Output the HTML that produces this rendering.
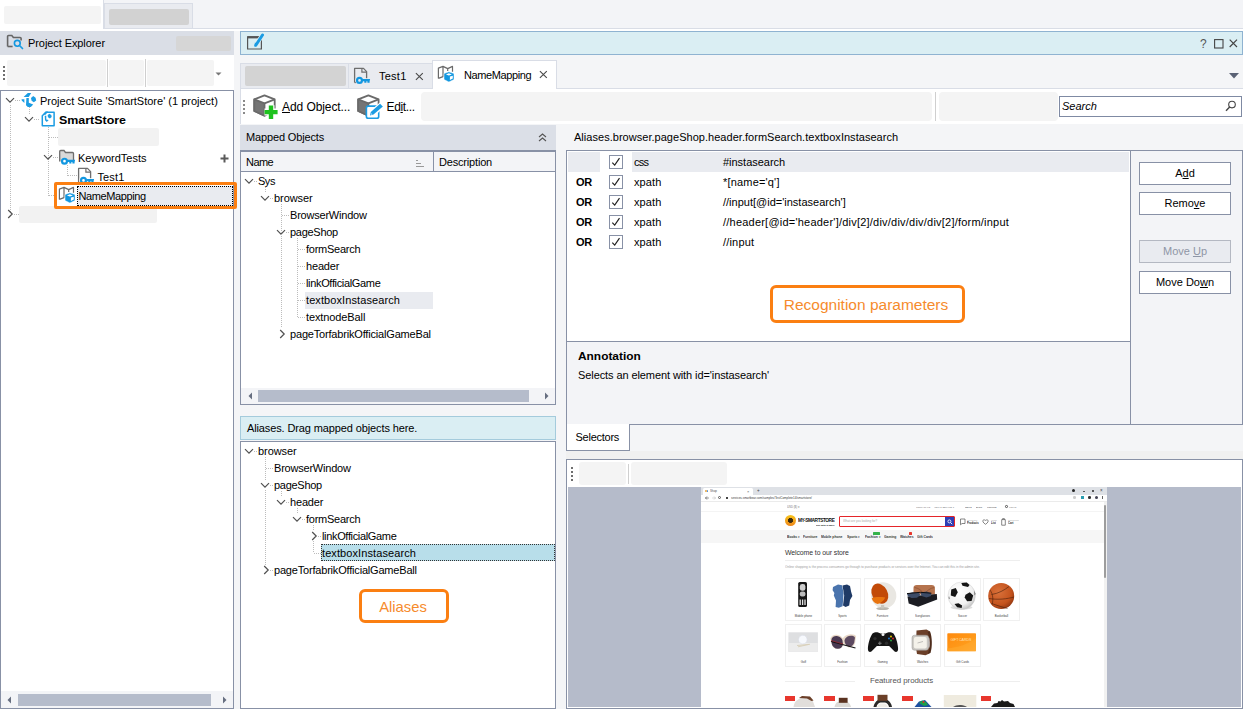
<!DOCTYPE html>
<html><head><meta charset="utf-8">
<style>
*{box-sizing:border-box;margin:0;padding:0}
html,body{width:1243px;height:709px;overflow:hidden;background:#f4f5f7;font-family:"Liberation Sans",sans-serif;font-size:11px;color:#000}
.a{position:absolute}
.t{position:absolute;white-space:pre;line-height:13px;height:13px}
.ph{position:absolute;background:#f2f2f2;border-radius:2px}
.phd{position:absolute;background:#d2d2d2;border-radius:2px}
.hd{position:absolute;background:#dadee6}
.bd{border:1px solid #8891a6}
.dotv{position:absolute;width:1px;background-image:linear-gradient(#bcbcbc 50%,transparent 50%);background-size:1px 2px}
.doth{position:absolute;height:1px;background-image:linear-gradient(90deg,#bcbcbc 50%,transparent 50%);background-size:2px 1px}
.btn{position:absolute;background:#fff;border:1px solid #8891a6;text-align:center;line-height:21px;height:23px;width:92px;left:1139px}
u{text-decoration:underline;text-underline-offset:1px}
</style></head><body>
<!-- TOP TAB BAR -->
<div class="a" style="left:0;top:0;width:1243px;height:29px;background:#f3f4f7;border-bottom:1px solid #d9dde6"></div><div class="a" style="left:0;top:29px;width:1243px;height:2px;background:#fff"></div>
<div class="a" style="left:0;top:0;width:104px;height:29px;background:#fff;border-right:1px solid #d9dde6"></div>
<div class="ph" style="left:4px;top:6px;width:97px;height:18px;background:#f4f4f4"></div>
<div class="a" style="left:104px;top:3px;width:89px;height:25px;background:#e9ebf0;border:1px solid #d9dde6;border-bottom:none"></div>
<div class="phd" style="left:109px;top:9px;width:80px;height:16px"></div>

<!-- LEFT PANEL -->
<div class="hd" style="left:0;top:31px;width:234px;height:24px"></div>
<div class="t" style="left:28px;top:37px;letter-spacing:-.08px">Project Explorer</div>
<div class="phd" style="left:176px;top:36px;width:55px;height:15px;background:#d6d6d6"></div>

<div class="a" style="left:0;top:55px;width:234px;height:35px;background:#fff"></div>
<div class="a" style="left:3px;top:66px;width:2px;height:14px;background-image:linear-gradient(#6e6e6e 50%,transparent 50%);background-size:2px 4px"></div>
<div class="ph" style="left:7px;top:60px;width:99px;height:26px;background:#f4f4f4"></div>
<div class="a" style="left:107px;top:59px;width:1px;height:28px;background:#cfcfcf"></div>
<div class="ph" style="left:109px;top:60px;width:35px;height:26px;background:#f4f4f4"></div>
<div class="a" style="left:145px;top:59px;width:1px;height:28px;background:#cfcfcf"></div>
<div class="ph" style="left:147px;top:60px;width:67px;height:26px;background:#f4f4f4"></div>
<svg class="a" style="left:215px;top:72px" width="8" height="5"><path d="M0.5 0.5h6L3.5 3.5z" fill="#777"/></svg>
<svg class="a" style="left:6px;top:34px" width="18" height="16" viewBox="0 0 18 16"><path d="M1.600 12.500v-10a1 1 0 0 1 1-1h3.200l1.600 2h6.700a1 1 0 0 1 1 1v2" fill="none" stroke="#666" stroke-width="1.600"/><path d="M1.600 12.500h5" fill="none" stroke="#666" stroke-width="1.600"/><circle cx="11.300" cy="9.300" r="2.900" fill="#dadee6" stroke="#1297e0" stroke-width="1.600"/><path d="M13.5 11.5l3 3" stroke="#1b9ce3" stroke-width="1.7" stroke-linecap="round"/></svg>

<div class="a bd" style="left:0;top:90px;width:234px;height:619px;background:#fff"></div>

<div class="dotv" style="left:10px;top:105px;height:108px"></div>
<div class="doth" style="left:15px;top:100px;width:6px"></div>
<div class="dotv" style="left:29px;top:107px;height:8px"></div>
<div class="doth" style="left:34px;top:119px;width:6px"></div>
<div class="dotv" style="left:48px;top:127px;height:69px"></div>
<div class="doth" style="left:49px;top:137px;width:9px"></div>
<div class="doth" style="left:53px;top:157px;width:6px"></div>
<div class="doth" style="left:49px;top:195px;width:6px"></div>
<div class="dotv" style="left:67px;top:165px;height:11px"></div>
<div class="doth" style="left:68px;top:175px;width:10px"></div>
<div class="doth" style="left:14px;top:214px;width:5px"></div>
<svg class="a" style="left:5px;top:97px" width="10" height="7" viewBox="0 0 10 7"><path d="M1 1.2l4 4 4-4" fill="none" stroke="#505050" stroke-width="1.2"/></svg><svg class="a" style="left:24px;top:116px" width="10" height="7" viewBox="0 0 10 7"><path d="M1 1.2l4 4 4-4" fill="none" stroke="#505050" stroke-width="1.2"/></svg><svg class="a" style="left:43px;top:154px" width="10" height="7" viewBox="0 0 10 7"><path d="M1 1.2l4 4 4-4" fill="none" stroke="#505050" stroke-width="1.2"/></svg><svg class="a" style="left:7px;top:209px" width="7" height="10" viewBox="0 0 7 10"><path d="M1.2 1l4 4-4 4" fill="none" stroke="#505050" stroke-width="1.2"/></svg>
<svg class="a" style="left:16px;top:88px" width="24" height="22" viewBox="16 88 24 22"><g fill="#1b9ce3"><path d="M23.600 97l4.200-4h3.400l-2.500 4z"/><path d="M21.500 99.300h2.900v3.600l-2.500-2.200z"/><path d="M26.400 98.100h2.400v4.600l4.400 1.900-2.400 2.500h-3l-1.800-1.900z"/><path d="M31 98.100l2.200-2.200 2.400 1.900.6 2.600-2.400 1.900-2.200-1.600z"/></g></svg>
<svg class="a" style="left:40px;top:110px" width="16" height="18" viewBox="40 110 16 18"><path d="M46 112.200h8.100v13.600H42.300v-10z" fill="#fff" stroke="#1b9ce3" stroke-width="1.500" stroke-linejoin="round"/><g fill="#1b9ce3"><path d="M42.600 114.700l3-3.200h2.600l-2.600 3.200z"/><path d="M44.700 115.800h1.600v3.600l2.400.6-1.900 1.900-1.800-1.600z"/><path d="M47.600 115.300l1.700-1.500 2 1.300.4 1.900-1.800 1.500-1.900-1.200z"/></g></svg>
<div class="ph" style="left:58px;top:128px;width:101px;height:18px"></div>
<svg class="a" style="left:58px;top:149px" width="19" height="17" viewBox="0 0 19 17"><path d="M1.7 12.5v-10a1 1 0 0 1 1-1h3.3l1.5 2h7a1 1 0 0 1 1 1v8" fill="#d9d9d9" stroke="#6e6e6e" stroke-width="1.3"/><circle cx="6.500" cy="12.200" r="2.450" fill="#fff" stroke="#1297e0" stroke-width="2.200"/><path d="M9.300 10.700h7.800l-.5 2.400v1.500h-2.200v-1.500h-1v1.500h-2.100v-1.500H9.300z" fill="#1297e0"/></svg>
<svg class="a" style="left:77px;top:167px" width="19" height="17" viewBox="0 0 19 17"><path d="M1.600 15.500V1.400h8.900l3.100 3.200v7" fill="#fff" stroke="#6e6e6e" stroke-width="1.300" stroke-linejoin="round"/><path d="M8.900 1.400v3.700h4.700" fill="none" stroke="#6e6e6e" stroke-width="1.200"/><path d="M1.600 15.500h1.600" stroke="#6e6e6e" stroke-width="1.300"/><circle cx="6.500" cy="13.400" r="2.450" fill="#fff" stroke="#fff" stroke-width="3.200"/><path d="M9.500 11.400h8v3.400h-8z" fill="#fff"/><circle cx="6.500" cy="13.400" r="2.450" fill="#fff" stroke="#1297e0" stroke-width="2.200"/><path d="M9.300 11.900h7.800l-.5 2.400v1.500h-2.200v-1.500h-1v1.500h-2.100v-1.500H9.300z" fill="#1297e0"/></svg>
<div class="a" style="left:77px;top:186px;width:156px;height:20px;background:#e9ebf0;border:1px dotted #000"></div>
<svg class="a" style="left:58px;top:186px" width="19" height="19" viewBox="0 0 19 19"><path d="M1.400 13.400v-10.300l4.600-1.700 4.700 2.200 4.800-2.200v5.400M1.400 13.400l4.600-1.800v-10.200M10.700 3.600v2.400" fill="none" stroke="#6a6a6a" stroke-width="1.200" stroke-linejoin="round"/><path d="M11.900 6.800l5.100 1.700v6.100l-5.100 2.400-4.900-2.400v-6.100z" fill="#1297e0" stroke="#fff" stroke-width=".5"/><path d="M8.900 9.500l3-1.200 3 1.200-3 1z" fill="#fff"/><path d="M12.900 11.600l2.900-.9v2.900l-2.900 1.400z" fill="#fff"/></svg>
<div class="ph" style="left:19px;top:206px;width:138px;height:17px"></div>
<div class="a" style="left:54px;top:182px;width:183px;height:27px;border:3px solid #fb7f12;border-radius:2px"></div>
<div class="t" style="left:40px;top:95px">Project Suite 'SmartStore' (1 project)</div>
<div class="t" style="left:59px;top:114px;font-weight:700;transform:scaleX(1.13);transform-origin:0 0">SmartStore</div>
<div class="t" style="left:78px;top:152px">KeywordTests</div>
<div class="t" style="left:97.400px;top:171px;letter-spacing:.18px">Test1</div>
<div class="t" style="left:78.500px;top:190px;letter-spacing:-.4px">NameMapping</div>
<svg class="a" style="left:220px;top:154px" width="9" height="9"><path d="M4.500 0.500v8M0.500 4.500h8" stroke="#5a5a5a" stroke-width="2"/></svg>
<div class="a" style="left:1px;top:691px;width:232px;height:17px;background:#f3f4f7"></div>
<div class="a" style="left:18px;top:694px;width:193px;height:12px;background:#b5bccb"></div>
<svg class="a" style="left:7px;top:696px" width="5" height="8"><path d="M4 0.5v7L0.5 4z" fill="#666e80"/></svg>
<svg class="a" style="left:222px;top:696px" width="5" height="8"><path d="M1 0.5v7L4.5 4z" fill="#666e80"/></svg>


<!-- RIGHT: title -->
<div class="a" style="left:240px;top:31px;width:1003px;height:24px;background:#daeef3;border:1px solid #8fb3d1"></div>

<!-- title bar icons -->
<svg class="a" style="left:244px;top:31px" width="24" height="22" viewBox="244 31 24 22"><path d="M247.600 36.800h13.800v12.200h-13.800z" fill="none" stroke="#555" stroke-width="1.200"/><path d="M247.600 37.300h13.800" stroke="#555" stroke-width="2.200"/><path d="M262.700 34.600l-7.600 11.800" stroke="#daeef3" stroke-width="4.400"/><path d="M262.500 35l-6.700 10.300" stroke="#1b9ce3" stroke-width="3" stroke-linecap="round"/><path d="M256.600 43.600l-2.100 3.600 .4-4.600z" fill="#1b9ce3"/></svg>
<div class="t" style="left:1200px;top:37.500px;color:#555;font-size:12px">?</div>
<svg class="a" style="left:1214px;top:38.500px" width="10" height="10"><rect x=".6" y=".6" width="8.4" height="8.4" fill="none" stroke="#444" stroke-width="1.1"/></svg>
<svg class="a" style="left:1229px;top:39px" width="9" height="9"><path d="M0.7 0.7l7.3 7.3M8 0.7l-7.3 7.3" stroke="#444" stroke-width="1.2"/></svg>
<!-- doc tab strip -->
<div class="a" style="left:240px;top:88px;width:1003px;height:1px;background:#d9dde6"></div>
<div class="a" style="left:240px;top:63px;width:193px;height:26px;background:#e9ebf0;border:1px solid #d9dde6"></div>
<div class="a" style="left:348px;top:64px;width:1px;height:24px;background:#d9dde6"></div>
<div class="phd" style="left:245px;top:66px;width:101px;height:20px;background:#d3d3d3"></div>
<svg class="a" style="left:353px;top:67px" width="19" height="17" viewBox="0 0 19 17"><path d="M1.600 15.500V1.400h8.900l3.100 3.200v7" fill="none" stroke="#6e6e6e" stroke-width="1.300" stroke-linejoin="round"/><path d="M8.900 1.400v3.700h4.700" fill="none" stroke="#6e6e6e" stroke-width="1.200"/><path d="M1.600 15.500h1.600" stroke="#6e6e6e" stroke-width="1.300"/><circle cx="6.500" cy="13.400" r="2.450" fill="#e9ebf0" stroke="#e9ebf0" stroke-width="3.200"/><path d="M9.500 11.400h8v3.400h-8z" fill="#e9ebf0"/><circle cx="6.500" cy="13.400" r="2.450" fill="#e9ebf0" stroke="#1297e0" stroke-width="2.200"/><path d="M9.300 11.900h7.800l-.5 2.400v1.500h-2.200v-1.500h-1v1.500h-2.100v-1.500H9.300z" fill="#1297e0"/></svg>
<div class="t" style="left:379px;top:70px;letter-spacing:.24px">Test1</div>
<svg class="a" style="left:415px;top:72px" width="9" height="9"><path d="M0.900 1.200l6.900 6.600M7.800 1.200l-6.900 6.600" stroke="#4a4a4a" stroke-width="1.150"/></svg>
<div class="a" style="left:432px;top:60px;width:125px;height:29px;background:#fff;border:1px solid #d9dde6;border-bottom:none"></div>
<svg class="a" style="left:437px;top:65px" width="19" height="19" viewBox="0 0 19 19"><path d="M1.400 13.400v-10.300l4.600-1.700 4.700 2.200 4.800-2.200v5.400M1.400 13.400l4.600-1.800v-10.200M10.700 3.600v2.400" fill="none" stroke="#6a6a6a" stroke-width="1.200" stroke-linejoin="round"/><path d="M11.900 6.800l5.100 1.700v6.100l-5.100 2.400-4.900-2.400v-6.100z" fill="#1297e0" stroke="#fff" stroke-width=".5"/><path d="M8.900 9.500l3-1.200 3 1.200-3 1z" fill="#fff"/><path d="M12.900 11.600l2.900-.9v2.900l-2.900 1.400z" fill="#fff"/></svg>
<div class="t" style="left:464px;top:69px;letter-spacing:-.4px">NameMapping</div>
<svg class="a" style="left:539px;top:70px" width="9" height="9"><path d="M0.900 1.200l6.900 6.600M7.800 1.200l-6.900 6.600" stroke="#4a4a4a" stroke-width="1.150"/></svg>
<svg class="a" style="left:1229px;top:73px" width="10" height="6"><path d="M0 0h10L5 5.5z" fill="#5a6275"/></svg>
<!-- toolbar -->
<div class="a" style="left:240px;top:89px;width:1003px;height:35px;background:#fff;border-left:1px solid #d9dde6"></div>
<div class="a" style="left:243px;top:100px;width:2px;height:14px;background-image:linear-gradient(#8a8a8a 50%,transparent 50%);background-size:2px 4px"></div>
<svg class="a" style="left:250px;top:90px" width="140" height="32" viewBox="250 90 140 32"><g transform="translate(0 0)"><path d="M264.500 95.300l10.200 4.100v11.600l-10.200 4.700-10.200-4.700V99.400z" fill="#fff" stroke="#6a6a6a" stroke-width="1.800" stroke-linejoin="round"/><path d="M254.300 99.400l10.200 4v12.300l-10.200-4.700z" fill="#757575" stroke="#6a6a6a" stroke-width="1.800" stroke-linejoin="round"/><path d="M264.500 103.400l10.200-4" fill="none" stroke="#6a6a6a" stroke-width="1.800"/></g><path d="M271 105.300v13.700M264.500 112.100h13.400" stroke="#fff" stroke-width="7"/><path d="M271 105.500v13.400M264.600 112.100h13" stroke="#1ec21e" stroke-width="4.400"/><g transform="translate(103.9 0)"><path d="M264.500 95.300l10.200 4.100v11.600l-10.200 4.700-10.200-4.700V99.400z" fill="#fff" stroke="#6a6a6a" stroke-width="1.800" stroke-linejoin="round"/><path d="M254.300 99.400l10.200 4v12.300l-10.200-4.700z" fill="#757575" stroke="#6a6a6a" stroke-width="1.800" stroke-linejoin="round"/><path d="M264.500 103.400l10.200-4" fill="none" stroke="#6a6a6a" stroke-width="1.800"/></g><rect x="366.400" y="106.100" width="12.300" height="12.200" rx="1.800" fill="#fff" stroke="#1b9ce3" stroke-width="1.600"/><path d="M382 105l-11 9.500" stroke="#fff" stroke-width="6.500"/><path d="M381.800 105.400l-1.700-1.600-9.300 8.200-.8 3.600 3.500-1 9.400-8.100z" fill="#1b9ce3"/><circle cx="371.600" cy="114" r=".6" fill="#fff"/></svg>
<div class="t" style="left:282px;top:100px;font-size:12px;line-height:15px;height:15px;letter-spacing:-.08px"><u>A</u>dd Object...</div>
<div class="t" style="left:386.500px;top:100px;font-size:12px;line-height:15px;height:15px;letter-spacing:-.35px">Ed<u>i</u>t...</div>
<div class="ph" style="left:421px;top:92px;width:511px;height:29px;background:#f4f4f4;border-radius:4px"></div>
<div class="a" style="left:935px;top:92px;width:1px;height:29px;background:#cfcfcf"></div>
<div class="ph" style="left:939px;top:92px;width:119px;height:29px;background:#f4f4f4;border-radius:4px"></div>
<div class="a" style="left:1059px;top:96px;width:183px;height:21px;background:#fff;border:1px solid #7f8aa3"></div>
<div class="t" style="left:1062px;top:100px;font-style:italic">Search</div>
<svg class="a" style="left:1225px;top:100px" width="12" height="12" viewBox="0 0 12 12"><circle cx="7" cy="4.6" r="3.3" fill="none" stroke="#444" stroke-width="1.1"/><path d="M4.7 7L1 10.8" stroke="#444" stroke-width="1.4"/></svg>
<!-- Mapped objects -->
<div class="hd" style="left:240px;top:125px;width:316px;height:25px;background:#dbdfe7"></div>
<div class="t" style="left:246px;top:131px;letter-spacing:-0.15px">Mapped Objects</div>
<svg class="a" style="left:538px;top:133px" width="9" height="9" viewBox="0 0 9 9"><path d="M1 4l3.5-3L8 4M1 8l3.5-3L8 8" fill="none" stroke="#555" stroke-width="1.1"/></svg>
<div class="a bd" style="left:240px;top:150px;width:316px;height:255px;background:#fff;border-top-width:2px"></div>
<div class="a" style="left:241px;top:152px;width:314px;height:20px;background:#f3f4f7;border-bottom:1px solid #8891a6"></div>
<div class="a" style="left:433px;top:152px;width:1px;height:19px;background:#8891a6"></div>
<div class="t" style="left:246px;top:156px;letter-spacing:-0.54px">Name</div>
<div class="t" style="left:439px;top:156px;letter-spacing:-0.18px">Description</div>
<svg class="a" style="left:416px;top:158.500px" width="8" height="8"><path d="M0 1.5h2M0 4.5h5M0 7.5h8" stroke="#999" stroke-width="1"/></svg>
<svg class="a" style="left:244px;top:177.5px" width="10" height="7" viewBox="0 0 10 7"><path d="M1 1.2l4 4 4-4" fill="none" stroke="#505050" stroke-width="1.2"/></svg>
<div class="t" style="left:258px;top:175px;letter-spacing:-0.48px">Sys</div>
<svg class="a" style="left:260px;top:194.5px" width="10" height="7" viewBox="0 0 10 7"><path d="M1 1.2l4 4 4-4" fill="none" stroke="#505050" stroke-width="1.2"/></svg>
<div class="t" style="left:274px;top:192px;letter-spacing:-0.07px">browser</div>
<div class="t" style="left:290px;top:209px;letter-spacing:-0.21px">BrowserWindow</div>
<svg class="a" style="left:276px;top:228.5px" width="10" height="7" viewBox="0 0 10 7"><path d="M1 1.2l4 4 4-4" fill="none" stroke="#505050" stroke-width="1.2"/></svg>
<div class="t" style="left:290px;top:226px;letter-spacing:-0.28px">pageShop</div>
<div class="t" style="left:306px;top:243px;letter-spacing:-0.26px">formSearch</div>
<div class="t" style="left:306px;top:260px;letter-spacing:-0.18px">header</div>
<div class="t" style="left:306px;top:277px;letter-spacing:-0.34px">linkOfficialGame</div>
<div class="a" style="left:305px;top:292px;width:128px;height:17px;background:#e9ebf0"></div>
<div class="t" style="left:306px;top:294px;letter-spacing:0.09px">textboxInstasearch</div>
<div class="t" style="left:306px;top:311px;letter-spacing:-0.11px">textnodeBall</div>
<svg class="a" style="left:278.5px;top:329px" width="7" height="10" viewBox="0 0 7 10"><path d="M1.2 1l4 4-4 4" fill="none" stroke="#505050" stroke-width="1.2"/></svg>
<div class="t" style="left:290px;top:328px;letter-spacing:-0.18px">pageTorfabrikOfficialGameBal</div>
<div class="doth" style="left:254px;top:181px;width:4px"></div>
<div class="dotv" style="left:265px;top:187px;height:6px"></div>
<div class="doth" style="left:270px;top:198px;width:4px"></div>
<div class="dotv" style="left:281px;top:204px;height:124px"></div>
<div class="doth" style="left:282px;top:215px;width:8px"></div>
<div class="doth" style="left:286px;top:232px;width:4px"></div>
<div class="dotv" style="left:297px;top:238px;height:79px"></div>
<div class="doth" style="left:298px;top:249px;width:8px"></div>
<div class="doth" style="left:298px;top:266px;width:8px"></div>
<div class="doth" style="left:298px;top:283px;width:8px"></div>
<div class="doth" style="left:298px;top:300px;width:8px"></div>
<div class="doth" style="left:298px;top:317px;width:8px"></div>
<div class="a" style="left:241px;top:388px;width:314px;height:16px;background:#f3f4f7"></div>
<div class="a" style="left:258px;top:390px;width:271px;height:12px;background:#b5bccb"></div>
<svg class="a" style="left:248px;top:392px" width="5" height="8"><path d="M4 0.5v7L0.5 4z" fill="#666e80"/></svg>
<svg class="a" style="left:544px;top:392px" width="5" height="8"><path d="M1 0.5v7L4.5 4z" fill="#666e80"/></svg>
<!-- Aliases -->
<div class="a" style="left:240px;top:416px;width:316px;height:24px;background:#daeef3;border:1px solid #a4cbdc"></div>
<div class="t" style="left:247px;top:422px;letter-spacing:-.12px">Aliases. Drag mapped objects here.</div>
<div class="a bd" style="left:240px;top:441px;width:316px;height:268px;background:#fff"></div>
<svg class="a" style="left:244px;top:447.5px" width="10" height="7" viewBox="0 0 10 7"><path d="M1 1.2l4 4 4-4" fill="none" stroke="#505050" stroke-width="1.2"/></svg>
<div class="t" style="left:258px;top:445px;letter-spacing:-0.07px">browser</div>
<div class="t" style="left:274px;top:462px;letter-spacing:-0.21px">BrowserWindow</div>
<svg class="a" style="left:260px;top:481.5px" width="10" height="7" viewBox="0 0 10 7"><path d="M1 1.2l4 4 4-4" fill="none" stroke="#505050" stroke-width="1.2"/></svg>
<div class="t" style="left:274px;top:479px;letter-spacing:-0.28px">pageShop</div>
<svg class="a" style="left:276px;top:498.5px" width="10" height="7" viewBox="0 0 10 7"><path d="M1 1.2l4 4 4-4" fill="none" stroke="#505050" stroke-width="1.2"/></svg>
<div class="t" style="left:290px;top:496px;letter-spacing:-0.18px">header</div>
<svg class="a" style="left:292px;top:515.5px" width="10" height="7" viewBox="0 0 10 7"><path d="M1 1.2l4 4 4-4" fill="none" stroke="#505050" stroke-width="1.2"/></svg>
<div class="t" style="left:306px;top:513px;letter-spacing:-0.26px">formSearch</div>
<svg class="a" style="left:310.5px;top:531px" width="7" height="10" viewBox="0 0 7 10"><path d="M1.2 1l4 4-4 4" fill="none" stroke="#505050" stroke-width="1.2"/></svg>
<div class="t" style="left:322px;top:530px;letter-spacing:-0.34px">linkOfficialGame</div>
<div class="a" style="left:321px;top:544px;width:234px;height:17px;background:#b8deea;border:1px dotted #333"></div>
<div class="t" style="left:322px;top:547px;letter-spacing:0.09px">textboxInstasearch</div>
<svg class="a" style="left:262.5px;top:565px" width="7" height="10" viewBox="0 0 7 10"><path d="M1.2 1l4 4-4 4" fill="none" stroke="#505050" stroke-width="1.2"/></svg>
<div class="t" style="left:274px;top:564px;letter-spacing:-0.19px">pageTorfabrikOfficialGameBall</div>
<div class="doth" style="left:254px;top:451px;width:4px"></div>
<div class="dotv" style="left:265px;top:457px;height:23px"></div>
<div class="dotv" style="left:265px;top:490px;height:75px"></div>
<div class="doth" style="left:266px;top:468px;width:7px"></div>
<div class="doth" style="left:270px;top:485px;width:4px"></div>
<div class="doth" style="left:270px;top:570px;width:4px"></div>
<div class="dotv" style="left:281px;top:491px;height:6px"></div>
<div class="doth" style="left:286px;top:502px;width:4px"></div>
<div class="dotv" style="left:297px;top:508px;height:6px"></div>
<div class="doth" style="left:302px;top:519px;width:4px"></div>
<div class="dotv" style="left:313px;top:525px;height:6px"></div>
<div class="dotv" style="left:313px;top:541px;height:12px"></div>
<div class="doth" style="left:318px;top:536px;width:4px"></div>
<div class="doth" style="left:314px;top:553px;width:7px"></div>
<div class="a" style="left:358.500px;top:589px;width:90px;height:34px;border:3px solid #fb7f12;border-radius:6px;background:#fff;color:#f68b2c;font-size:14.800px;line-height:30px;text-align:center;padding-right:1px">Aliases</div>


<div class="t" style="left:574px;top:131px;letter-spacing:.03px">Aliases.browser.pageShop.header.formSearch.textboxInstasearch</div>
<div class="a bd" style="left:566px;top:150px;width:677px;height:275px;background:#f3f4f7"></div>
<div class="a" style="left:567px;top:151px;width:563px;height:190px;background:#fff"></div>
<div class="a" style="left:567px;top:341px;width:563px;height:1px;background:#8891a6"></div>
<div class="a" style="left:1130px;top:151px;width:1px;height:273px;background:#8891a6"></div>
<div class="a" style="left:568px;top:152px;width:32px;height:20px;background:#e9ebf0"></div>
<div class="a" style="left:632px;top:152px;width:497px;height:20px;background:#e9ebf0"></div>
<div class="a" style="left:609px;top:155px;width:14px;height:14px;background:#fff;border:1px solid #8891a6"></div><svg class="a" style="left:611px;top:157px" width="10" height="10"><path d="M1.300 5.600l2.400 2.500L8.500 1.200" fill="none" stroke="#222" stroke-width="1.200"/></svg>
<div class="t" style="left:634px;top:156px;letter-spacing:-0.73px">css</div>
<div class="t" style="left:723px;top:156px;letter-spacing:-0.02px">#instasearch</div>
<div class="t" style="left:576px;top:176px;font-weight:700;letter-spacing:-.2px">OR</div>
<div class="a" style="left:609px;top:175px;width:14px;height:14px;background:#fff;border:1px solid #8891a6"></div><svg class="a" style="left:611px;top:177px" width="10" height="10"><path d="M1.300 5.600l2.400 2.500L8.500 1.200" fill="none" stroke="#222" stroke-width="1.200"/></svg>
<div class="t" style="left:634px;top:176px;letter-spacing:0.10px">xpath</div>
<div class="t" style="left:723px;top:176px;letter-spacing:0.18px">*[name='q']</div>
<div class="t" style="left:576px;top:196px;font-weight:700;letter-spacing:-.2px">OR</div>
<div class="a" style="left:609px;top:195px;width:14px;height:14px;background:#fff;border:1px solid #8891a6"></div><svg class="a" style="left:611px;top:197px" width="10" height="10"><path d="M1.300 5.600l2.400 2.500L8.500 1.200" fill="none" stroke="#222" stroke-width="1.200"/></svg>
<div class="t" style="left:634px;top:196px;letter-spacing:0.10px">xpath</div>
<div class="t" style="left:723px;top:196px">//input[@id='instasearch']</div>
<div class="t" style="left:576px;top:216px;font-weight:700;letter-spacing:-.2px">OR</div>
<div class="a" style="left:609px;top:215px;width:14px;height:14px;background:#fff;border:1px solid #8891a6"></div><svg class="a" style="left:611px;top:217px" width="10" height="10"><path d="M1.300 5.600l2.400 2.500L8.500 1.200" fill="none" stroke="#222" stroke-width="1.200"/></svg>
<div class="t" style="left:634px;top:216px;letter-spacing:0.10px">xpath</div>
<div class="t" style="left:723px;top:216px;letter-spacing:0.22px">//header[@id='header']/div[2]/div/div/div/div[2]/form/input</div>
<div class="t" style="left:576px;top:236px;font-weight:700;letter-spacing:-.2px">OR</div>
<div class="a" style="left:609px;top:235px;width:14px;height:14px;background:#fff;border:1px solid #8891a6"></div><svg class="a" style="left:611px;top:237px" width="10" height="10"><path d="M1.300 5.600l2.400 2.500L8.500 1.200" fill="none" stroke="#222" stroke-width="1.200"/></svg>
<div class="t" style="left:634px;top:236px;letter-spacing:0.10px">xpath</div>
<div class="t" style="left:723px;top:236px;letter-spacing:0.18px">//input</div>

<div class="a" style="left:770px;top:285px;width:195px;height:37.500px;border:3px solid #fb7f12;border-radius:6px;background:#fff;color:#f68b2c;font-size:15.500px;line-height:33px;text-align:center;padding-right:3px">Recognition parameters</div>
<div class="t" style="left:578px;top:350px;font-weight:700;transform:scaleX(1.082);transform-origin:0 0">Annotation</div>
<div class="t" style="left:578px;top:369px;letter-spacing:-0.09px">Selects an element with id='instasearch'</div>
<div class="btn" style="top:162px">A<u>d</u>d</div>
<div class="btn" style="top:192px">Remo<u>v</u>e</div>
<div class="btn" style="top:240px;background:#e9ebf0;border-color:#b4b8c2;color:#8f96a6">Move <u>U</u>p</div>
<div class="btn" style="top:271px">Move Do<u>w</u>n</div>
<!-- selectors tab -->
<div class="a" style="left:566px;top:424px;width:64px;height:27px;background:#fff;border:1px solid #8891a6;border-top:none"></div>
<div class="t" style="left:575.500px;top:431px;letter-spacing:-.25px">Selectors</div>
<div class="a" style="left:566px;top:451px;width:677px;height:8px;background:#f0f0f0"></div>
<!-- screenshot panel -->
<div class="a bd" style="left:566px;top:459px;width:677px;height:250px;background:#fff"></div><div class="a" style="left:568px;top:487px;width:673px;height:220px;background:#b5bbca"></div>

<div class="a" style="left:571px;top:467px;width:2px;height:14px;background-image:linear-gradient(#6e6e6e 50%,transparent 50%);background-size:2px 4px"></div>
<div class="ph" style="left:579px;top:461.500px;width:47px;height:23px;background:#f4f4f4;border-radius:3px"></div>
<div class="a" style="left:628px;top:464px;width:1px;height:20px;background:#cfcfcf"></div>
<div class="ph" style="left:631px;top:461.500px;width:96px;height:23px;background:#f4f4f4;border-radius:3px"></div>
<div id="shot" class="a" style="left:701px;top:487px;width:406px;height:220px;background:#fff;overflow:hidden;font-family:'Liberation Sans',sans-serif">
<div class="a" style="left:0px;top:0px;width:406px;height:7.5px;background:#dee1e6;"></div>
<div class="a" style="left:2px;top:1px;width:50px;height:7px;background:#fff;border-radius:1.5px 1.5px 0 0"></div>
<div class="a" style="left:4px;top:3px;width:2.2px;height:2.2px;background:#e8a33d;border-radius:50%"></div>
<div class="a" style="left:5.5px;top:3.4px;width:1.6px;height:1.6px;background:#4a8fd8;border-radius:50%"></div>
<div class="a" style="transform:scale(.25);transform-origin:0 0;left:9px;top:2px;font-size:12px;line-height:16px;color:#555;white-space:pre;">Shop</div>
<div class="a" style="transform:scale(.25);transform-origin:0 0;left:46px;top:1.5px;font-size:16px;line-height:20px;color:#555;white-space:pre;">×</div>
<div class="a" style="transform:scale(.25);transform-origin:0 0;left:56px;top:1.2px;font-size:18px;line-height:22px;color:#444;white-space:pre;">+</div>
<div class="a" style="left:371px;top:2.3px;width:3px;height:3px;background:#222;border-radius:50%"></div>
<div class="a" style="left:381.5px;top:3.8px;width:2px;height:0.5px;background:#555;"></div>
<div class="a" style="left:390.5px;top:2.7px;width:2.2px;height:2.2px;background:#555;"></div>
<div class="a" style="transform:scale(.25);transform-origin:0 0;left:399px;top:1.2px;font-size:18px;line-height:22px;color:#444;white-space:pre;">×</div>
<div class="a" style="left:0px;top:7.5px;width:406px;height:7px;background:#fff;"></div>
<div class="a" style="left:0px;top:14.3px;width:406px;height:0.6px;background:#ebebeb;"></div>
<svg class="a" style="left:3.500px;top:9px" width="4" height="4" viewBox="0 0 4 4"><path d="M3.800 2H.5M1.900.5L.4 2l1.500 1.500" fill="none" stroke="#555" stroke-width=".7"/></svg>
<svg class="a" style="left:10.500px;top:9px" width="4" height="4" viewBox="0 0 4 4"><path d="M.2 2h3.300M2.100.5L3.600 2 2.100 3.500" fill="none" stroke="#c4c4c4" stroke-width=".7"/></svg>
<div class="a" style="left:17px;top:9.3px;width:3px;height:3px;background:transparent;border:.7px solid #555;border-radius:50%"></div>
<div class="a" style="left:25px;top:9.8px;width:1.6px;height:2px;background:#444;"></div>
<div class="a" style="transform:scale(.25);transform-origin:0 0;left:29.5px;top:8.9px;font-size:12px;line-height:16px;color:#3c3c3c;white-space:pre;letter-spacing:-0.08px">services.smartbear.com/samples/TestComplete14/smartstore/</div>
<div class="a" style="left:372px;top:9.4px;width:2.6px;height:2.6px;background:#ccc;border-radius:50%"></div>
<div class="a" style="left:379.5px;top:9px;width:3.2px;height:3.2px;background:#2a9db0;"></div>
<div class="a" style="left:387px;top:9.4px;width:2.6px;height:2.6px;background:#333;border-radius:50%"></div>
<div class="a" style="left:394px;top:9.2px;width:3px;height:3px;background:#445;border-radius:50%"></div>
<div class="a" style="left:401.3px;top:9px;width:0.6px;height:3.4px;background:#666;"></div>
<div class="a" style="transform:scale(.25);transform-origin:0 0;left:85.500px;top:17.700px;font-size:11.200px;line-height:16px;color:#777;white-space:pre">USD ($) ▾</div>
<div class="a" style="transform:scale(.25);transform-origin:0 0;left:214.5px;top:18.200px;font-size:8.800px;line-height:16.4px;color:#777;white-space:pre;">CONTACT US</div>
<div class="a" style="transform:scale(.25);transform-origin:0 0;left:233px;top:18.200px;font-size:8.800px;line-height:16.4px;color:#777;white-space:pre;">HELP &amp; SERVICE  ▾</div>
<div class="a" style="transform:scale(.25);transform-origin:0 0;left:264px;top:18.200px;font-size:8.800px;line-height:16.4px;color:#444;white-space:pre;">NEWS</div>
<div class="a" style="transform:scale(.25);transform-origin:0 0;left:275px;top:18.200px;font-size:8.800px;line-height:16.4px;color:#444;white-space:pre;">BLOG</div>
<div class="a" style="transform:scale(.25);transform-origin:0 0;left:286px;top:18.200px;font-size:8.800px;line-height:16.4px;color:#444;white-space:pre;">FORUMS</div>
<div class="a" style="left:304.300px;top:18.300px;width:2.400px;height:2.400px;background:transparent;border:.6px solid #555;border-radius:50%"></div>
<div class="a" style="transform:scale(.25);transform-origin:0 0;left:308.400px;top:18.200px;font-size:8.800px;line-height:16.4px;color:#777;white-space:pre;">LOG IN</div>
<div class="a" style="left:0px;top:24.3px;width:403px;height:0.6px;background:#f4f4f4;"></div>
<div class="a" style="left:84px;top:28px;width:11px;height:11px;border-radius:50%;background:radial-gradient(circle at 50% 48%,#3a2a10 0 30%,transparent 34%),linear-gradient(#f8c51d,#ee8619);"></div>
<div class="a" style="transform:scale(.25);transform-origin:0 0;left:96.6px;top:30.3px;font-size:19px;line-height:24.800px;color:#111;white-space:pre;font-weight:700;letter-spacing:-1.600px">MY-SMARTSTORE</div>
<div class="a" style="transform:scale(.25);transform-origin:0 0;left:115px;top:36.2px;font-size:9.6px;line-height:13.6px;color:#222;white-space:pre;font-weight:700">buy with a smile</div>
<div class="a" style="left:138px;top:29px;width:116px;height:10.5px;background:#fff;border:1px solid #e5252a;border-radius:1px"></div>
<div class="a" style="transform:scale(.25);transform-origin:0 0;left:142px;top:32.3px;font-size:12px;line-height:16px;color:#aaa;white-space:pre;">What are you looking for?</div>
<div class="a" style="left:244px;top:30px;width:9px;height:8.5px;background:#2f3fb5;"></div>
<svg class="a" style="left:246px;top:31.6px" width="6" height="6" viewBox="0 0 6 6"><circle cx="2.4" cy="2.4" r="1.5" fill="none" stroke="#fff" stroke-width=".8"/><path d="M3.5 3.5l1.7 1.7" stroke="#fff" stroke-width=".9"/></svg>
<svg class="a" style="left:258px;top:29.5px" width="62" height="10" viewBox="0 0 62 10"><g fill="none" stroke="#555" stroke-width=".7"><path d="M1.5 2h4.5v4.5H3l-1.5 1.3z"/><path d="M26.5 7.3C22 4.5 24 1.6 26.5 3.4 29 1.6 31 4.5 26.5 7.3z"/><path d="M42.7 2.6h3.6v5.6h-3.6z M43.6 2.6v-1h1.8v1"/></g></svg>
<div class="a" style="transform:scale(.25);transform-origin:0 0;left:266px;top:30.8px;font-size:10px;line-height:14px;color:#aaa;white-space:pre;">Compare</div>
<div class="a" style="transform:scale(.25);transform-origin:0 0;left:266px;top:33.6px;font-size:10.8px;line-height:14.8px;color:#222;white-space:pre;font-weight:700">Products</div>
<div class="a" style="transform:scale(.25);transform-origin:0 0;left:290px;top:30.8px;font-size:10px;line-height:14px;color:#aaa;white-space:pre;">Wish</div>
<div class="a" style="transform:scale(.25);transform-origin:0 0;left:290px;top:33.6px;font-size:10.8px;line-height:14.8px;color:#222;white-space:pre;font-weight:700">List</div>
<div class="a" style="transform:scale(.25);transform-origin:0 0;left:307px;top:30.8px;font-size:10px;line-height:14px;color:#aaa;white-space:pre;">Shopping</div>
<div class="a" style="transform:scale(.25);transform-origin:0 0;left:307px;top:33.6px;font-size:10.8px;line-height:14.8px;color:#222;white-space:pre;font-weight:700">Cart</div>
<div class="a" style="left:0px;top:43.4px;width:403px;height:12.4px;background:#f6f6f6;"></div>
<div class="a" style="transform:scale(.25);transform-origin:0 0;left:86px;top:47.8px;font-size:13.6px;line-height:17.6px;color:#3a3a3a;white-space:pre;font-weight:700;letter-spacing:-0.200px">Books ▾</div>
<div class="a" style="transform:scale(.25);transform-origin:0 0;left:102px;top:47.8px;font-size:13.6px;line-height:17.6px;color:#3a3a3a;white-space:pre;font-weight:700;letter-spacing:-0.200px">Furniture</div>
<div class="a" style="transform:scale(.25);transform-origin:0 0;left:120px;top:47.8px;font-size:13.6px;line-height:17.6px;color:#3a3a3a;white-space:pre;font-weight:700;letter-spacing:-0.200px">Mobile phone</div>
<div class="a" style="transform:scale(.25);transform-origin:0 0;left:146px;top:47.8px;font-size:13.6px;line-height:17.6px;color:#3a3a3a;white-space:pre;font-weight:700;letter-spacing:-0.200px">Sports ▾</div>
<div class="a" style="transform:scale(.25);transform-origin:0 0;left:163.5px;top:47.8px;font-size:13.6px;line-height:17.6px;color:#3a3a3a;white-space:pre;font-weight:700;letter-spacing:-0.200px">Fashion ▾</div>
<div class="a" style="transform:scale(.25);transform-origin:0 0;left:182.5px;top:47.8px;font-size:13.6px;line-height:17.6px;color:#3a3a3a;white-space:pre;font-weight:700;letter-spacing:-0.200px">Gaming</div>
<div class="a" style="transform:scale(.25);transform-origin:0 0;left:199px;top:47.8px;font-size:13.6px;line-height:17.6px;color:#3a3a3a;white-space:pre;font-weight:700;letter-spacing:-0.200px">Watches</div>
<div class="a" style="transform:scale(.25);transform-origin:0 0;left:215.5px;top:47.8px;font-size:13.6px;line-height:17.6px;color:#3a3a3a;white-space:pre;font-weight:700;letter-spacing:-0.200px">Gift Cards</div>
<div class="a" style="left:172px;top:45px;width:6.5px;height:2.6px;background:#35b34a;border-radius:.5px"></div>
<div class="a" style="left:207.5px;top:45px;width:3.8px;height:2.8px;background:#e8362d;border-radius:.5px"></div>
<div class="a" style="left:84px;top:61.5px;font-size:6.9px;line-height:8.3px;color:#333;white-space:pre;letter-spacing:-.08px">Welcome to our store</div>
<div class="a" style="left:84px;top:73.3px;width:235px;height:0.6px;background:#eeeeee;"></div>
<div class="a" style="transform:scale(.25);transform-origin:0 0;left:84px;top:78.2px;font-size:12.6px;line-height:16.6px;color:#999;white-space:pre;">Online shopping is the process consumers go through to purchase products or services over the Internet. You can edit this in the admin site.</div>
<div class="a" style="left:83.7px;top:90.8px;width:37px;height:43px;border:1px solid #f0f0f0;background:#fff"></div>
<div class="a" style="transform:scale(.25);transform-origin:0 0;left:83.7px;top:127.1px;width:148px;text-align:center;font-size:11.6px;line-height:16px;color:#444;font-weight:400">Mobile phone</div>
<div class="a" style="left:123.4px;top:90.8px;width:37px;height:43px;border:1px solid #f0f0f0;background:#fff"></div>
<div class="a" style="transform:scale(.25);transform-origin:0 0;left:123.4px;top:127.1px;width:148px;text-align:center;font-size:11.6px;line-height:16px;color:#444;font-weight:400">Sports</div>
<div class="a" style="left:163.1px;top:90.8px;width:37px;height:43px;border:1px solid #f0f0f0;background:#fff"></div>
<div class="a" style="transform:scale(.25);transform-origin:0 0;left:163.1px;top:127.1px;width:148px;text-align:center;font-size:11.6px;line-height:16px;color:#444;font-weight:400">Furniture</div>
<div class="a" style="left:202.8px;top:90.8px;width:37px;height:43px;border:1px solid #f0f0f0;background:#fff"></div>
<div class="a" style="transform:scale(.25);transform-origin:0 0;left:202.8px;top:127.1px;width:148px;text-align:center;font-size:11.6px;line-height:16px;color:#444;font-weight:400">Sunglasses</div>
<div class="a" style="left:242.5px;top:90.8px;width:37px;height:43px;border:1px solid #f0f0f0;background:#fff"></div>
<div class="a" style="transform:scale(.25);transform-origin:0 0;left:242.5px;top:127.1px;width:148px;text-align:center;font-size:11.6px;line-height:16px;color:#444;font-weight:400">Soccer</div>
<div class="a" style="left:282.2px;top:90.8px;width:37px;height:43px;border:1px solid #f0f0f0;background:#fff"></div>
<div class="a" style="transform:scale(.25);transform-origin:0 0;left:282.2px;top:127.1px;width:148px;text-align:center;font-size:11.6px;line-height:16px;color:#444;font-weight:400">Basketball</div>
<div class="a" style="left:83.7px;top:137.3px;width:37px;height:43px;border:1px solid #f0f0f0;background:#fff"></div>
<div class="a" style="transform:scale(.25);transform-origin:0 0;left:83.7px;top:172.800px;width:148px;text-align:center;font-size:11.6px;line-height:16px;color:#444;font-weight:400">Golf</div>
<div class="a" style="left:123.4px;top:137.3px;width:37px;height:43px;border:1px solid #f0f0f0;background:#fff"></div>
<div class="a" style="transform:scale(.25);transform-origin:0 0;left:123.4px;top:172.800px;width:148px;text-align:center;font-size:11.6px;line-height:16px;color:#444;font-weight:400">Fashion</div>
<div class="a" style="left:163.1px;top:137.3px;width:37px;height:43px;border:1px solid #f0f0f0;background:#fff"></div>
<div class="a" style="transform:scale(.25);transform-origin:0 0;left:163.1px;top:172.800px;width:148px;text-align:center;font-size:11.6px;line-height:16px;color:#444;font-weight:400">Gaming</div>
<div class="a" style="left:202.8px;top:137.3px;width:37px;height:43px;border:1px solid #f0f0f0;background:#fff"></div>
<div class="a" style="transform:scale(.25);transform-origin:0 0;left:202.8px;top:172.800px;width:148px;text-align:center;font-size:11.6px;line-height:16px;color:#444;font-weight:400">Watches</div>
<div class="a" style="left:242.5px;top:137.3px;width:37px;height:43px;border:1px solid #f0f0f0;background:#fff"></div>
<div class="a" style="transform:scale(.25);transform-origin:0 0;left:242.5px;top:172.800px;width:148px;text-align:center;font-size:11.6px;line-height:16px;color:#444;font-weight:400">Gift Cards</div>
<svg class="a" style="left:0;top:0" width="406" height="220" viewBox="701 487 406 220">
<defs>
<radialGradient id="gb" cx=".4" cy=".35" r=".7"><stop offset="0" stop-color="#fff"/><stop offset=".7" stop-color="#f1f1f1"/><stop offset="1" stop-color="#bdbdbd"/></radialGradient>
<radialGradient id="bb" cx=".4" cy=".35" r=".7"><stop offset="0" stop-color="#d9713a"/><stop offset=".7" stop-color="#c4531d"/><stop offset="1" stop-color="#8f3510"/></radialGradient>
<linearGradient id="gc" x1="0" y1="0" x2="1" y2="1"><stop offset="0" stop-color="#ff8a0d"/><stop offset=".6" stop-color="#ff9a1a"/><stop offset="1" stop-color="#ffb347"/></linearGradient>
</defs>
<!-- phone -->
<rect x="798.2" y="582" width="8.8" height="25" rx="1.6" fill="#151515"/>
<rect x="799.8" y="584" width="5.6" height="6.8" rx="2.4" fill="#cfcfcf"/>
<rect x="799.8" y="591.6" width="5.6" height="5" rx="2" fill="#bcbcbc"/>
<path d="M800.2 599.5v5.5M802.6 599.5v5.5M805 599.5v5.5" stroke="#e3e3e3" stroke-width="1.3"/>
<!-- shoes -->
<path d="M833 587l5-2.5 4 .8 1.6 8-1 13-3.800 1.5-3.2-.8.4-6.500-2.200-5 .6-2.600-1.800-2.600z" fill="#4a74ad"/>
<path d="M842.500 585.500l4.500-1 3 1.600 1.200 6 1.200 4-2.400 4-.8 5.500-3.600 1.300-2.600-1.300 1.200-10z" fill="#1f3a66"/>
<!-- chair -->
<ellipse cx="883.600" cy="595.300" rx="12.600" ry="13.200" transform="rotate(-28 883.600 595.300)" fill="#e9e7e2"/>
<ellipse cx="879.800" cy="593.600" rx="7.800" ry="10.600" transform="rotate(-28 879.800 593.600)" fill="#c24a08"/>
<path d="M871.800 598.200c3 -1.200 8-1.400 13.500-.6c-1.600 3.500-5 6-7.600 6.400c-3-.6-5.300-3-5.900-5.800z" fill="#e8740f"/>
<ellipse cx="882.600" cy="608.600" rx="6.400" ry="1.500" fill="#b9b6ae"/>
<path d="M881 605h3.200v3.400H881z" fill="#c9c6be"/>
<!-- sunglasses -->
<path d="M913.500 588c0-2.200 1.300-3 3.200-3h15c2 0 3.200 1 3.200 3v6.500h-21.400z" fill="#b5734d"/>
<path d="M914.500 587.500c4 .5 7 3 9.800 6.600c2.800-3.600 6-6 10-6.600" fill="none" stroke="#8a4f31" stroke-width=".7"/>
<path d="M907.500 596.500l29.300-2.500.4 5.500-19 7.200-9.500-3.300z" fill="#1b1c22"/>
<path d="M907 593.800l5.800-1.600 6.200.700 1.400 2.100-3.500 2.700-5.300.300-3.700-1.800z" fill="#3c4b66"/>
<path d="M920.400 592.500l6.200-.9 4.600 1.700-.2 2.600-4.600 1.500-4.800-1.400z" fill="#3c4b66"/>
<path d="M907 593.600l13.400-1.300 11 .9" fill="none" stroke="#0d0d10" stroke-width="1"/>
<!-- soccer -->
<ellipse cx="961.500" cy="607.500" rx="11" ry="2" fill="#ddd"/>
<circle cx="961.700" cy="595.700" r="13.700" fill="url(#gb)" stroke="#c9c9c9" stroke-width=".4"/>
<path d="M951.200 589.500l4.600-1.400 2 4.200-2.600 4.700-4.400-1.600z" fill="#151515"/>
<path d="M965.500 594.800l4.300-2.500 3.400 3.300-1.600 5.300-4.500.3-2.400-3.600z" fill="#151515"/>
<path d="M961.300 583l5.500-.6 2.700 2.600-1.500 1.900-5.500-1.200z" fill="#151515"/>
<path d="M954.500 604l4-.7 3.600 2.200-.5 2.600-4.400-.8z" fill="#151515"/>
<path d="M974.500 590.500l.9 3.500-.7 1.600z M949 596l.6 3.300-.9-1z" fill="#222"/>
<!-- basketball -->
<circle cx="1001.200" cy="596" r="13" fill="url(#bb)"/>
<g fill="none" stroke="#3d1a0a" stroke-width=".55"><path d="M990 590c3 4 3.500 10 2 14.500"/><path d="M991.500 594.500c7-1 13-4.500 17.500-8"/><path d="M989 598.500c9 1.500 18 .5 25-1.500"/><path d="M991.500 603.500c6 2 12 4 16 5"/></g>
<!-- golf -->
<rect x="788.400" y="632.300" width="29.500" height="19.600" fill="#dedfe1"/>
<rect x="788.400" y="643" width="29.500" height="8.900" fill="#ececec"/>
<circle cx="802.800" cy="639.600" r="4.300" fill="#f7f9fd" stroke="#d4d9e4" stroke-width=".5"/>
<path d="M797 645.500l13-1.200M798 646.800l11-2.400" stroke="#d8cfb8" stroke-width=".9"/>
<!-- fashion glasses -->
<path d="M830.300 638.500c1-3 4-4.300 7.500-3.600c2.500.5 4 1.800 5 3.400c1.500-2.300 4-3.800 7.500-4c3-.1 5.500.8 5.800 2.300l-1 6.500c-.8 3-3.500 4.600-6.500 4.300l-4.500-3.500-3 4c-3 1.800-7 1-8.800-2z" fill="#e9d9c8"/>
<path d="M831.500 639c1-2.500 3.500-3.400 6.300-2.800c2.400.5 3.800 2 4.600 3.700l.6 4.500c-.7 2.800-2.500 4.300-5 4.400c-3.200.1-5.600-2-6.300-5z" fill="#4a3a52"/>
<path d="M844.500 640c1.200-2.800 3.500-4.300 6.500-4.300c2 0 3.500.5 4 1.700l-.8 5.400c-.8 2.600-2.800 3.800-5 3.600c-3-.3-4.700-3-4.700-6.400z" fill="#5c4960"/>
<path d="M831 641.500l24.500 6.500" stroke="#141414" stroke-width="1.200"/>
<path d="M831 640.500l12 3.500" stroke="#b5232a" stroke-width=".6"/>
<!-- gamepad -->
<path d="M872.500 633.500c1.500-1 4-1.500 5.600-1l2.500 1h4.800l2.500-1c1.700-.5 4 0 5.600 1c2.500 3.500 4.500 10.500 4.600 15.500c0 2.500-1.700 3.500-3.500 2.500l-5.500-5.500h-12.200l-5.500 5.500c-1.800 1-3.500 0-3.500-2.500c.1-5 2.100-12 4.600-15.500z" fill="#151515"/>
<circle cx="883" cy="634.400" r="1.500" fill="#f2f2f2"/>
<circle cx="875" cy="638.600" r="1.700" fill="#2c2c2c"/><circle cx="886.500" cy="643.300" r="1.700" fill="#2c2c2c"/>
<path d="M878 643.300h3.600M879.800 641.500v3.600" stroke="#777" stroke-width="1.100"/>
<circle cx="891" cy="636.500" r=".9" fill="#f5d400"/><circle cx="889" cy="638.500" r=".9" fill="#1f7fe0"/><circle cx="893" cy="638.500" r=".9" fill="#e02a2a"/><circle cx="891" cy="640.500" r=".9" fill="#2fb344"/>
<!-- watch -->
<path d="M916.500 630.500l10-1 3.500 2 .6 6-14.300 .500z" fill="#6b3f28"/>
<path d="M916 648l14.500-.5-1 6-4 1.800-8.500-1.300z" fill="#6b3f28"/>
<path d="M927.500 632c2.500 5 3 15 .5 21.500l2.500-.500c2-6 1.800-16-.5-21.500z" fill="#4e2c1b"/>
<rect x="912" y="635.200" width="16.600" height="15" rx="2.600" fill="#c9c7c2" stroke="#9a9894" stroke-width=".5"/>
<rect x="913.800" y="636.900" width="13" height="11.600" rx="2" fill="#f4f2ea"/>
<path d="M917.500 643l5.500-1.500" stroke="#888" stroke-width=".5"/>
<!-- gift card -->
<rect x="947.300" y="633.200" width="28.700" height="18" rx=".8" fill="url(#gc)"/>
<path d="M947.300 648.500c10-1 20-4 28.700-10v12.700h-28.700z" fill="#ffa62b" opacity=".7"/>
<text x="950.500" y="640.800" font-family="Liberation Sans" font-size="3.600" fill="#ffe2b8" letter-spacing="-.1">GIFT CARDS</text>
<!-- featured products row -->
<path d="M793.500 707c.5-3.500 2-6 4-7l3.500-2.500 8.500-.7 3 3.200 2.500 7z" fill="#e1dedb"/>
<path d="M799 698l3-2 8 .5 3.500 4-2 .5-4.500-2.500z" fill="#6b3f28"/>
<path d="M834.500 707c.5-2.500 1.500-4 3-5l9.500-.5c2 1 3.500 3 4 5.500z" fill="#dcdad6"/>
<rect x="838.800" y="697.800" width="8.800" height="5" fill="#5a3220"/>
<path d="M873.500 707c.5-3 2-5.500 4.500-7h9.500c2.500 1.500 4 4 4.500 7h-3c-.5-2.500-2-4-4-4.500h-4.500c-2 .5-3.500 2-4 4.500z" fill="#2a2a2a"/>
<rect x="877.500" y="694.800" width="10" height="6" fill="#6b3f28"/>
<path d="M880 703.500h5c1.500.8 2.500 2 3 3.500h-11c.5-1.500 1.500-2.700 3-3.500z" fill="#f0eee9"/>
<path d="M914.500 707l4.500-5.500 6-1.500 6.500 7z" fill="#1d4fa0"/>
<path d="M919 703l3-2.500 4 1.500 2 3-4 1z" fill="#1da04a"/>
<circle cx="923.500" cy="702" r="1" fill="#e02a2a"/>
<rect x="943.800" y="695" width="32.500" height="12" fill="#efebdf"/>
<path d="M953 707c2-1.500 5-2.300 8-2c2.500.2 4.500 1 6 2z" fill="#555"/>
<path d="M991 707l3-3.500 3.500-.5 1-2 2 .5 1.500-1.500 2 1.500 4-.5 2 2 3.500 1 1.500 3z" fill="#1a1a1a"/>
</svg>
<div class="a" style="left:84px;top:193.6px;width:70px;height:0.6px;background:#eeeeee;"></div>
<div class="a" style="left:249px;top:193.6px;width:70px;height:0.6px;background:#eeeeee;"></div>
<div class="a" style="left:83px;top:189.200px;width:235px;text-align:center;font-size:7.900px;line-height:9px;color:#555;letter-spacing:-.05px">Featured products</div>
<div class="a" style="left:83.7px;top:208.8px;width:10.5px;height:4.800px;background:#e8362d;"></div>
<div class="a" style="left:123px;top:208.8px;width:10.5px;height:4.800px;background:#e8362d;"></div>
<div class="a" style="left:162.3px;top:208.8px;width:10.5px;height:4.800px;background:#e8362d;"></div>
<div class="a" style="left:201.4px;top:208.8px;width:10.5px;height:4.800px;background:#e8362d;"></div>
<div class="a" style="left:279.5px;top:208.8px;width:10.5px;height:4.800px;background:#e8362d;"></div>

<div class="a" style="left:402.6px;top:15px;width:3.4px;height:205px;background:#f1f1f1;"></div>
<div class="a" style="left:403.2px;top:18px;width:2.2px;height:73px;background:#9d9d9d;border-radius:1px"></div>
</div>


</body></html>
